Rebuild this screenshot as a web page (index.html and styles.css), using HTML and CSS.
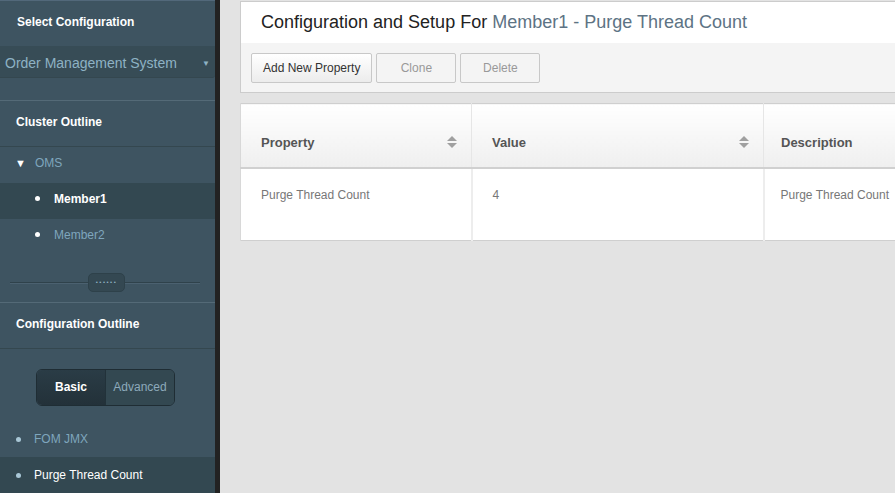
FILE: index.html
```html
<!DOCTYPE html>
<html lang="en">
<head>
  <meta charset="UTF-8">
  <title>Configuration and Setup</title>
  <link rel="stylesheet" href="styles.css">
</head>
<body>
  <div class="app">
    <div class="sidebar">
      <div class="side-title first">Select Configuration</div>
      <div class="select-box">
        <span>Order Management System</span>
        <span class="select-arrow">&#9660;</span>
      </div>
      <div class="side-title bordered">Cluster Outline</div>
      <ul class="tree">
        <li class="tree-root"><span class="caret">&#9660;</span>OMS</li>
        <li class="tree-member active"><span class="dot"></span>Member1</li>
        <li class="tree-member"><span class="dot"></span>Member2</li>
      </ul>
      <div class="splitter">
        <div class="splitter-handle">&#8226;&#8226;&#8226;&#8226;&#8226;&#8226;</div>
      </div>
      <div class="side-title bordered">Configuration Outline</div>
      <div class="toggle-row">
        <div class="toggle">
          <span class="toggle-on">Basic</span>
          <span class="toggle-off">Advanced</span>
        </div>
      </div>
      <ul class="props">
        <li><span class="dot small"></span>FOM JMX</li>
        <li class="active"><span class="dot small"></span>Purge Thread Count</li>
      </ul>
    </div>

    <div class="main">
      <div class="header-card">
        <div class="page-title">Configuration and Setup For <span class="title-sub">Member1 - Purge Thread Count</span></div>
        <div class="toolbar">
          <button class="btn">Add New Property</button>
          <button class="btn disabled">Clone</button>
          <button class="btn disabled">Delete</button>
        </div>
      </div>

      <table class="grid">
        <thead>
          <tr>
            <th class="col-prop">Property <span class="sort"></span></th>
            <th class="col-val">Value <span class="sort"></span></th>
            <th class="col-desc">Description</th>
          </tr>
        </thead>
        <tbody>
          <tr>
            <td>Purge Thread Count</td>
            <td>4</td>
            <td class="col-desc">Purge Thread Count</td>
          </tr>
        </tbody>
      </table>
    </div>
  </div>
</body>
</html>
```

FILE: styles.css
```css
body {
  margin: 0;
  font-family: "Liberation Sans", Arial, sans-serif;
  background-color: #e3e3e3;
  overflow: hidden;
}

.app {
  display: flex;
  height: 493px;
}

/* left panel */
.sidebar {
  width: 215px;
  flex-shrink: 0;
  background-color: #3e5461;
  border-right: 5px solid #222;
  color: #fff;
}

.side-title {
  font-size: 12px;
  font-weight: bold;
  padding: 0 16px;
  height: 45px;
  line-height: 43px;
}

.side-title.first {
  border-top: 1px solid #52687a;
  height: 45px;
  line-height: 43px;
  padding-left: 17px;
}

.side-title.bordered {
  border-top: 1px solid #546a77;
  border-bottom: 1px solid #34474f;
}

.select-box {
  display: flex;
  justify-content: space-between;
  align-items: center;
  box-sizing: border-box;
  height: 32px;
  padding: 3px 5px 0 5px;
  background-color: #374c56;
  border-bottom: 1px solid #34474f;
  border-radius: 0 0 3px 0;
  color: #8eb2c4;
  font-size: 14px;
  margin-bottom: 22px;
}

.select-arrow {
  font-size: 8px;
  color: #8eb2c4;
}

.tree, .props {
  list-style: none;
  margin: 0;
  padding: 0;
}

.tree li, .props li {
  display: flex;
  align-items: center;
  box-sizing: border-box;
  height: 36px;
  font-size: 12px;
}

.tree li {
  padding-bottom: 5px;
}

.tree-root {
  padding-left: 15px;
  color: #7fa6bd;
}

.caret {
  font-size: 11px;
  color: #fff;
  width: 20px;
}

.tree-member {
  padding-left: 35px;
  color: #7fa6bd;
}

.tree-member.active {
  background-color: #334851;
  color: #fff;
  font-weight: bold;
}

.dot {
  width: 5px;
  height: 5px;
  border-radius: 50%;
  background-color: #fff;
  margin-right: 14px;
}

.dot.small {
  background-color: #a9c7d6;
  margin-right: 13px;
}

.splitter {
  position: relative;
  height: 47px;
}

.splitter::before {
  content: "";
  position: absolute;
  left: 10px;
  right: 15px;
  top: 27px;
  border-top: 1px solid #2f424b;
  border-bottom: 1px solid #4b6170;
}

.splitter-handle {
  position: absolute;
  left: 88px;
  top: 18px;
  width: 35px;
  height: 17px;
  border-radius: 5px;
  background-color: #344852;
  border: 1px solid #2e414a;
  color: #8fb0c2;
  font-size: 6px;
  line-height: 17px;
  text-align: center;
  letter-spacing: 1.5px;
}

.toggle-row {
  display: flex;
  justify-content: center;
  padding: 20px 0 15px 0;
  margin-left: -4px;
}

.toggle {
  display: flex;
  height: 35px;
  border: 1px solid #1f2d34;
  border-radius: 6px;
  overflow: hidden;
  font-size: 12px;
}

.toggle-on {
  width: 68px;
  line-height: 35px;
  text-align: center;
  font-weight: bold;
  color: #fff;
  background: linear-gradient(#2a3c46, #233139);
}

.toggle-off {
  width: 68px;
  line-height: 35px;
  text-align: center;
  color: #8daabb;
  background-color: #334851;
  border-left: 1px solid #22323a;
}

.props li {
  padding-left: 16px;
  color: #7fa6bd;
}

.props li.active {
  background-color: #334851;
  color: #fff;
}

/* right side */
.main {
  flex: 1;
  padding: 1px 0 0 20px;
  overflow: hidden;
}

.header-card {
  width: 680px;
  border: 1px solid #cccccc;
  background-color: #f4f4f4;
}

.page-title {
  background-color: #fff;
  height: 41px;
  line-height: 41px;
  padding-left: 20px;
  font-size: 18px;
  color: #222;
}

.title-sub {
  color: #5d7384;
}

.toolbar {
  display: flex;
  gap: 4px;
  padding: 10px 10px 9px 10px;
}

.btn {
  height: 30px;
  padding: 0 11px;
  font-family: "Liberation Sans", Arial, sans-serif;
  font-size: 12px;
  color: #333;
  border: 1px solid #c8c8c8;
  border-radius: 2px;
  background: linear-gradient(#ffffff, #ececec);
}

.btn.disabled {
  width: 80px;
  color: #999;
  background: #f4f4f4;
}

.grid {
  margin-top: 10px;
  width: 680px;
  border-collapse: collapse;
  background-color: #fff;
  border-top: 1px solid #cfcfcf;
  border-bottom: 1px solid #cfcfcf;
}

.grid th {
  position: relative;
  height: 50px;
  padding: 13px 20px 0 20px;
  text-align: left;
  font-size: 13px;
  color: #555;
  background: linear-gradient(#ffffff, #efefef);
  border-bottom: 2px solid #d0d0d0;
  border-left: 1px solid #e6e6e6;
}

.grid th:first-child, .grid td:first-child {
  border-left: 1px solid #d8d8d8;
}

.grid .col-desc {
  padding-left: 17px;
}

.grid td.col-desc {
  padding-left: 16px;
}

.col-prop {
  width: 190px;
}

.col-val {
  width: 251px;
}

.sort {
  position: absolute;
  right: 24px;
  top: 38px;
}

.sort::before, .sort::after {
  content: "";
  position: absolute;
  left: 0;
  border-left: 5px solid transparent;
  border-right: 5px solid transparent;
}

.sort::before {
  top: -6px;
  border-bottom: 5px solid #a0a0a0;
}

.sort::after {
  top: 1px;
  border-top: 5px solid #a0a0a0;
}

.grid td {
  height: 71px;
  padding: 0 20px;
  vertical-align: top;
  line-height: 52px;
  font-size: 12px;
  color: #777;
  border-left: 2px solid #ededed;
  white-space: nowrap;
}
```
